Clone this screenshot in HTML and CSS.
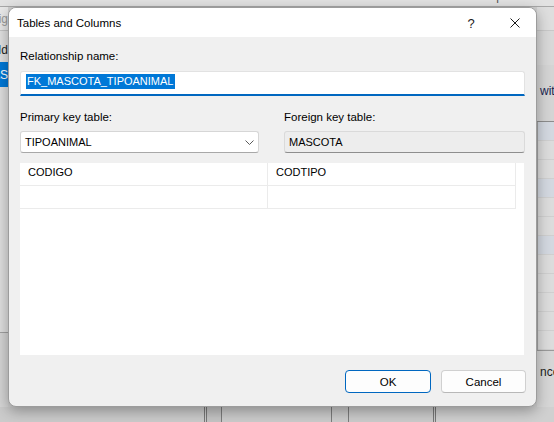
FILE: index.html
```html
<!DOCTYPE html>
<html>
<head>
<meta charset="utf-8">
<link rel="stylesheet" href="styles.css">
</head>
<body>
<div class="desk">
  <div class="bg-top"><span class="bg-top-text">Relationship</span></div>
  <div class="bg-mid">
    <div class="bg-left">
      <div class="bl-head"><span>Config</span></div>
      <div class="bl-row"><span>Id</span></div>
      <div class="bl-sel"><span>MAS</span></div>
      <div class="bl-fill"></div>
      <div class="bl-foot"></div>
    </div>
    <div class="bg-center"></div>
    <div class="bg-right">
      <div class="br-a"></div>
      <div class="br-b"></div>
      <div class="br-c"><span>with</span></div>
      <div class="br-rows">
        <div class="br-row alt"></div>
        <div class="br-row"></div>
        <div class="br-row"></div>
        <div class="br-row alt"></div>
        <div class="br-row"></div>
        <div class="br-row"></div>
        <div class="br-row alt"></div>
        <div class="br-row"></div>
        <div class="br-row"></div>
        <div class="br-row"></div>
        <div class="br-row"></div>
        <div class="br-row"></div>
      </div>
      <div class="br-foot"><span>nce</span></div>
    </div>
  </div>
  <div class="bg-bottom">
    <div class="bb-cell w1"></div>
    <div class="bb-cell w2"></div>
    <div class="bb-cell w3"></div>
    <div class="bb-cell w4"></div>
    <div class="bb-cell w5"></div>
    <div class="bb-cell w6"></div>
  </div>
</div>

<div class="dialog">
  <div class="titlebar">
    <span class="title">Tables and Columns</span>
    <span class="tb-btn help">?</span>
    <span class="tb-btn close">
      <svg width="10" height="10" viewBox="0 0 10 10"><path d="M0.5 0.5 L9.5 9.5 M9.5 0.5 L0.5 9.5" stroke="#1b1b1b" stroke-width="1" fill="none"/></svg>
    </span>
  </div>
  <div class="content">
    <div class="label first">Relationship name:</div>
    <div class="name-input"><span class="sel">FK_MASCOTA_TIPOANIMAL</span></div>
    <div class="two-col">
      <div class="col">
        <div class="label">Primary key table:</div>
        <div class="combo">
          <span class="val">TIPOANIMAL</span>
          <svg class="chev" width="9" height="5" viewBox="0 0 9 5"><path d="M0.5 0.5 L4.5 4.5 L8.5 0.5" stroke="#5a5a5a" stroke-width="1" fill="none"/></svg>
        </div>
      </div>
      <div class="col">
        <div class="label">Foreign key table:</div>
        <div class="ro-box"><span class="val">MASCOTA</span></div>
      </div>
    </div>
    <div class="grid">
      <div class="table">
        <div class="row">
          <div class="cell">CODIGO</div>
          <div class="cell">CODTIPO</div>
        </div>
        <div class="row">
          <div class="cell"></div>
          <div class="cell"></div>
        </div>
      </div>
    </div>
    <div class="buttons">
      <div class="btn primary">OK</div>
      <div class="btn">Cancel</div>
    </div>
  </div>
</div>
</body>
</html>
```

FILE: styles.css
```css
* { box-sizing: border-box; }

body {
  margin: 0;
  width: 554px;
  height: 422px;
  overflow: hidden;
  position: relative;
  font-family: "Liberation Sans", Arial, sans-serif;
  background: #d6d6d6;
  color: #000;
}

/* ---------- background window ---------- */
.desk {
  display: flex;
  flex-direction: column;
  height: 422px;
}

.bg-top {
  height: 7px;
  background: #e2e2e2;
  border-bottom: 1px solid #a8a8a8;
  overflow: hidden;
}

.bg-top-text {
  display: block;
  margin: -11px 0 0 437px;
  font-size: 12px;
  line-height: 14px;
  color: #555;
}

.bg-mid {
  flex: 1;
  display: flex;
  min-height: 0;
}

.bg-left {
  width: 8px;
  display: flex;
  flex-direction: column;
  background: #e0e0e0;
  overflow: hidden;
  font-size: 12px;
  white-space: nowrap;
}

.bl-head,
.bl-row,
.bl-sel {
  display: flex;
  justify-content: flex-end;
  align-items: center;
  overflow: hidden;
}

.bl-head {
  height: 24px;
  background: #e8e8e8;
  border-bottom: 1px solid #c4c4c4;
  color: #9a9a9a;
}

.bl-row {
  height: 31px;
  padding-top: 6px;
  color: #222;
}

.bl-sel {
  height: 25px;
  background: #0078d7;
  color: #fff;
}

.bl-fill {
  height: 246px;
  background: #dedede;
  border-bottom: 1px solid #a0a0a0;
}

.bl-foot {
  flex: 1;
  background: #d4d4d4;
}

.bg-center {
  flex: 1;
  background: #d0d0d0;
}

.bg-right {
  width: 17px;
  display: flex;
  flex-direction: column;
  overflow: hidden;
  font-size: 12px;
  white-space: nowrap;
  background: #dadada;
}

.br-a {
  height: 24px;
  background: #dedede;
  border-bottom: 1px solid #c8c8c8;
}

.br-b {
  height: 34px;
  background: #d8d8d8;
}

.br-c {
  height: 57px;
  background: #d4d4d4;
  border-bottom: 1px solid #8c8c8c;
  padding: 19px 0 0 3px;
  color: #1a2550;
  line-height: 14px;
}

.br-rows {
  display: flex;
  flex-direction: column;
  border-left: 1px solid #a4a4a4;
}

.br-row {
  height: 19px;
  background: #dcdcdc;
  border-bottom: 1px solid #cfcfcf;
}

.br-row.alt {
  background: #d3d8e0;
}

.br-foot {
  flex: 1;
  border-top: 1px solid #9a9a9a;
  padding: 14px 0 0 3px;
  color: #222;
  background: #d6d6d6;
}

.bg-bottom {
  height: 15px;
  display: flex;
  background: #c8c8c8;
}

.bb-cell {
  border-right: 1px solid #7c7c7c;
  background: #cbcbcb;
}

.w1 { width: 207px; border-right: 3px double #777; }
.w2 { width: 15px; background: #c4c4c4; }
.w3 { width: 110px; }
.w4 { width: 17px; }
.w5 { width: 87px; border-right: 3px double #777; }
.w6 { flex: 1; border-right: none; background: #d0d0d0; }

/* ---------- dialog ---------- */
.dialog {
  position: absolute;
  left: 8px;
  top: 7px;
  width: 529px;
  height: 400px;
  border: 1px solid #9c9c9c;
  border-radius: 8px;
  overflow: hidden;
  box-shadow: 0 4px 14px rgba(0, 0, 0, 0.32);
  display: flex;
  flex-direction: column;
  background: #f0f0f0;
}

.titlebar {
  height: 29px;
  background: #fff;
  display: flex;
  align-items: center;
  padding-left: 8px;
  flex-shrink: 0;
}

.title {
  font-size: 11.5px;
  color: #000;
  flex: 1;
}

.tb-btn {
  height: 29px;
  display: flex;
  align-items: center;
  justify-content: center;
  color: #1b1b1b;
}

.help {
  width: 46px;
  font-size: 13px;
  padding-top: 1px;
}

.close {
  width: 42px;
}

.content {
  flex: 1;
  padding: 0 11px;
  display: flex;
  flex-direction: column;
}

.label {
  font-size: 11.5px;
  line-height: 16px;
  color: #000;
}

.label.first {
  margin-top: 11px;
}

.name-input {
  margin-top: 7px;
  height: 25px;
  background: #fff;
  border: 1px solid #e2e2e2;
  border-bottom: 2px solid #0067c0;
  border-radius: 3px 3px 0 0;
  padding: 2px 0 0 5px;
  display: flex;
  align-items: flex-start;
}

.sel {
  background: #0078d7;
  color: #fff;
  font-size: 11px;
  line-height: 15px;
  padding: 0 1px;
}

.two-col {
  margin-top: 13px;
  display: grid;
  grid-template-columns: 239px 1fr;
  column-gap: 25px;
}

.combo,
.ro-box {
  margin-top: 6px;
  height: 22px;
  border-radius: 3px;
  display: flex;
  align-items: center;
  padding-left: 4px;
}

.combo {
  background: #fff;
  border: 1px solid #d6d6d6;
  border-bottom-color: #a8a8a8;
  justify-content: space-between;
  padding-right: 4px;
}

.ro-box {
  background: #ededed;
  border: 1px solid #dadada;
  border-bottom-color: #8e8e8e;
}

.val {
  font-size: 11px;
  color: #000;
}

.chev {
  display: block;
}

.grid {
  margin-top: 10px;
  margin-right: 1px;
  height: 192px;
  background: #fff;
  padding-right: 8px;
}

.table {
  display: flex;
  flex-direction: column;
}

.row {
  display: grid;
  grid-template-columns: 248px 248px;
  border-bottom: 1px solid #ebebeb;
}

.cell {
  height: 22px;
  font-size: 11px;
  line-height: 19px;
  padding-left: 8px;
  border-right: 1px solid #ebebeb;
}

.buttons {
  margin-top: 15px;
  margin-right: -1px;
  display: flex;
  justify-content: flex-end;
  gap: 10px;
}

.btn {
  height: 23px;
  border-radius: 4px;
  background: #fdfdfd;
  border: 1px solid #d0d0d0;
  border-bottom-color: #b8b8b8;
  font-size: 11.5px;
  display: flex;
  align-items: center;
  justify-content: center;
  width: 85px;
  color: #000;
}

.btn.primary {
  width: 86px;
  border: 1px solid #0067c0;
}
```
